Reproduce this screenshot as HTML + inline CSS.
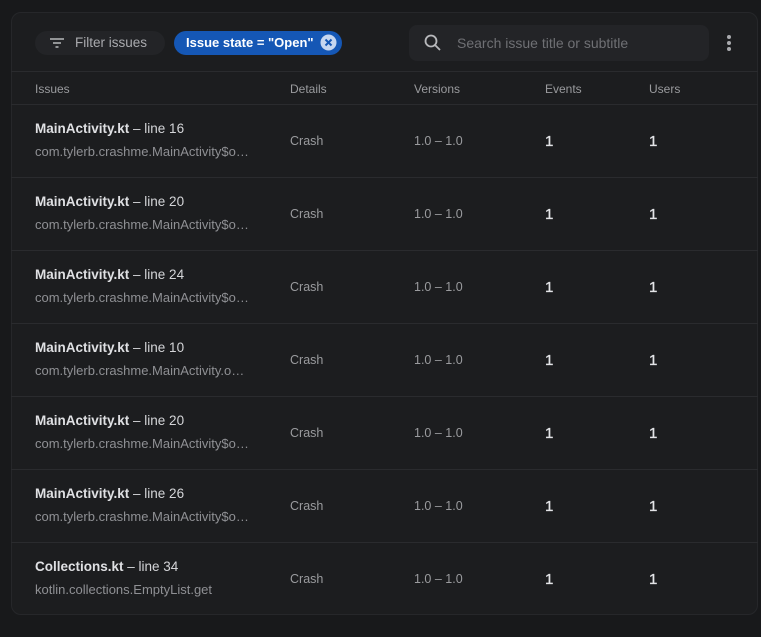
<!DOCTYPE html>
<html><head><style>
*{margin:0;padding:0;box-sizing:border-box}
body{width:761px;height:637px;background:#18191b;font-family:"Liberation Sans",sans-serif;position:relative;overflow:hidden}
.card{position:absolute;left:11px;top:12px;width:747px;height:603px;background:#1c1d1f;border:1px solid #26272a;border-radius:10px}
.abs{position:absolute;white-space:nowrap}
.line{position:absolute;left:11px;width:747px;height:1px;background:#2a2b2e}
.h{font-size:12px;color:#9a9b9e;top:82px}
.t{font-size:13.5px;color:#d4d5d8}
.t b{font-weight:bold;color:#dfe0e3}
.s{font-size:13px;color:#8f9094}
.c{font-size:12.5px;color:#9a9b9e}
.n{font-size:15px;color:#e3e4e7;-webkit-text-stroke:0.3px #e3e4e7}
</style></head><body>
<div class="card"></div>
<div class="abs" style="left:35px;top:31px;width:130px;height:24px;border-radius:12px;background:#232427"></div>
<svg class="abs" style="left:49px;top:36px" width="16" height="14" viewBox="0 0 16 14"><path d="M1 3h14M4 7h8M6.5 11h3" stroke="#b8b9bc" stroke-width="1.6"/></svg>
<div class="abs" style="left:75px;top:35px;font-size:13.5px;color:#a9aaae">Filter issues</div>
<div class="abs" style="left:174px;top:31px;width:168px;height:24px;border-radius:12px;background:#1557b5"></div>
<div class="abs" style="left:186px;top:35px;font-size:13px;color:#fff;font-weight:bold">Issue state = "Open"</div>
<svg class="abs" style="left:320px;top:34px" width="17" height="17" viewBox="0 0 17 17"><circle cx="8.5" cy="8.5" r="8" fill="#c6d6f0"/><path d="M5.5 5.5l6 6M11.5 5.5l-6 6" stroke="#1557b5" stroke-width="2"/></svg>
<div class="abs" style="left:409px;top:25px;width:300px;height:36px;border-radius:8px;background:#232427"></div>
<svg class="abs" style="left:423px;top:33px" width="20" height="20" viewBox="0 0 20 20"><circle cx="8" cy="8" r="5.5" fill="none" stroke="#b8b9bc" stroke-width="1.8"/><path d="M12 12l5 5" stroke="#b8b9bc" stroke-width="1.8"/></svg>
<div class="abs" style="left:457px;top:35px;font-size:14px;color:#6f7074">Search issue title or subtitle</div>
<svg class="abs" style="left:725px;top:34px" width="8" height="18"><circle cx="4" cy="3" r="2" fill="#a9aaae"/><circle cx="4" cy="9" r="2" fill="#a9aaae"/><circle cx="4" cy="15" r="2" fill="#a9aaae"/></svg>
<div class="line" style="top:71px"></div>
<div class="abs h" style="left:35px">Issues</div>
<div class="abs h" style="left:290px">Details</div>
<div class="abs h" style="left:414px">Versions</div>
<div class="abs h" style="left:545px">Events</div>
<div class="abs h" style="left:649px">Users</div>
<div class="line" style="top:104px"></div>

<div id="rows"></div>
<script>
var d=[["MainActivity.kt","16","com.tylerb.crashme.MainActivity$o…"],["MainActivity.kt","20","com.tylerb.crashme.MainActivity$o…"],["MainActivity.kt","24","com.tylerb.crashme.MainActivity$o…"],["MainActivity.kt","10","com.tylerb.crashme.MainActivity.o…"],["MainActivity.kt","20","com.tylerb.crashme.MainActivity$o…"],["MainActivity.kt","26","com.tylerb.crashme.MainActivity$o…"],["Collections.kt","34","kotlin.collections.EmptyList.get"]];
var h="";
d.forEach(function(r,i){var y=104+i*73;
h+='<div class="abs t" style="left:35px;top:'+(y+17)+'px"><b>'+r[0]+'</b> – line '+r[1]+'</div>';
h+='<div class="abs s" style="left:35px;top:'+(y+40)+'px">'+r[2]+'</div>';
h+='<div class="abs c" style="left:290px;top:'+(y+30)+'px">Crash</div>';
h+='<div class="abs c" style="left:414px;top:'+(y+30)+'px">1.0 – 1.0</div>';
h+='<div class="abs n" style="left:545px;top:'+(y+29)+'px">1</div>';
h+='<div class="abs n" style="left:649px;top:'+(y+29)+'px">1</div>';
if(i<6)h+='<div class="line" style="top:'+(y+73)+'px"></div>';});
document.getElementById("rows").innerHTML=h;
</script>
</body></html>
